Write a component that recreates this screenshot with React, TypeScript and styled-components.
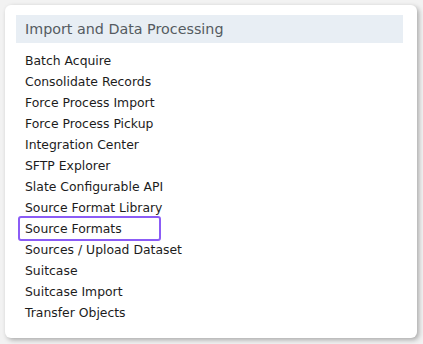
import React from "react";
import styled, { createGlobalStyle } from "styled-components";

const Global = createGlobalStyle`
  html, body { margin: 0; padding: 0; background: #f2f2f2; }
  body { font-family: "DejaVu Sans", Tahoma, Verdana, sans-serif; }
`;

const Page = styled.div`
  padding: 5px 6px 6px 5px;
  width: 423px;
  height: 344px;
  box-sizing: border-box;
`;

const Card = styled.div`
  background: #ffffff;
  border-radius: 6px;
  box-shadow: 2px 2px 5px rgba(0, 0, 0, 0.3);
  padding: 10px 14px 14px 11px;
  height: 100%;
  box-sizing: border-box;
`;

const Header = styled.div`
  background: #e8eef4;
  height: 28px;
  display: flex;
  align-items: center;
  padding-left: 9px;
  font-size: 14.3px;
  color: #555b61;
  margin-bottom: 7px;
`;

const List = styled.ul`
  list-style: none;
  margin: 0;
  padding: 0;
  display: flex;
  flex-direction: column;
`;

const Item = styled.li<{ $active?: boolean }>`
  height: 21px;
  display: flex;
  align-items: center;
  font-size: 12.4px;
  color: #1c1c1c;
  padding-left: 9px;
  position: relative;
  ${(p) =>
    p.$active &&
    `
    &::before {
      content: "";
      position: absolute;
      left: 2px;
      top: -2px;
      width: 143px;
      height: 25px;
      box-sizing: border-box;
      border: 2px solid #8b5cf6;
      border-radius: 3px;
    }
  `}
`;

const items = [
  "Batch Acquire",
  "Consolidate Records",
  "Force Process Import",
  "Force Process Pickup",
  "Integration Center",
  "SFTP Explorer",
  "Slate Configurable API",
  "Source Format Library",
  "Source Formats",
  "Sources / Upload Dataset",
  "Suitcase",
  "Suitcase Import",
  "Transfer Objects",
];

export default function App() {
  return (
    <>
      <Global />
      <Page>
        <Card>
          <Header>Import and Data Processing</Header>
          <List>
            {items.map((t) => (
              <Item key={t} $active={t === "Source Formats"}>
                {t}
              </Item>
            ))}
          </List>
        </Card>
      </Page>
    </>
  );
}
